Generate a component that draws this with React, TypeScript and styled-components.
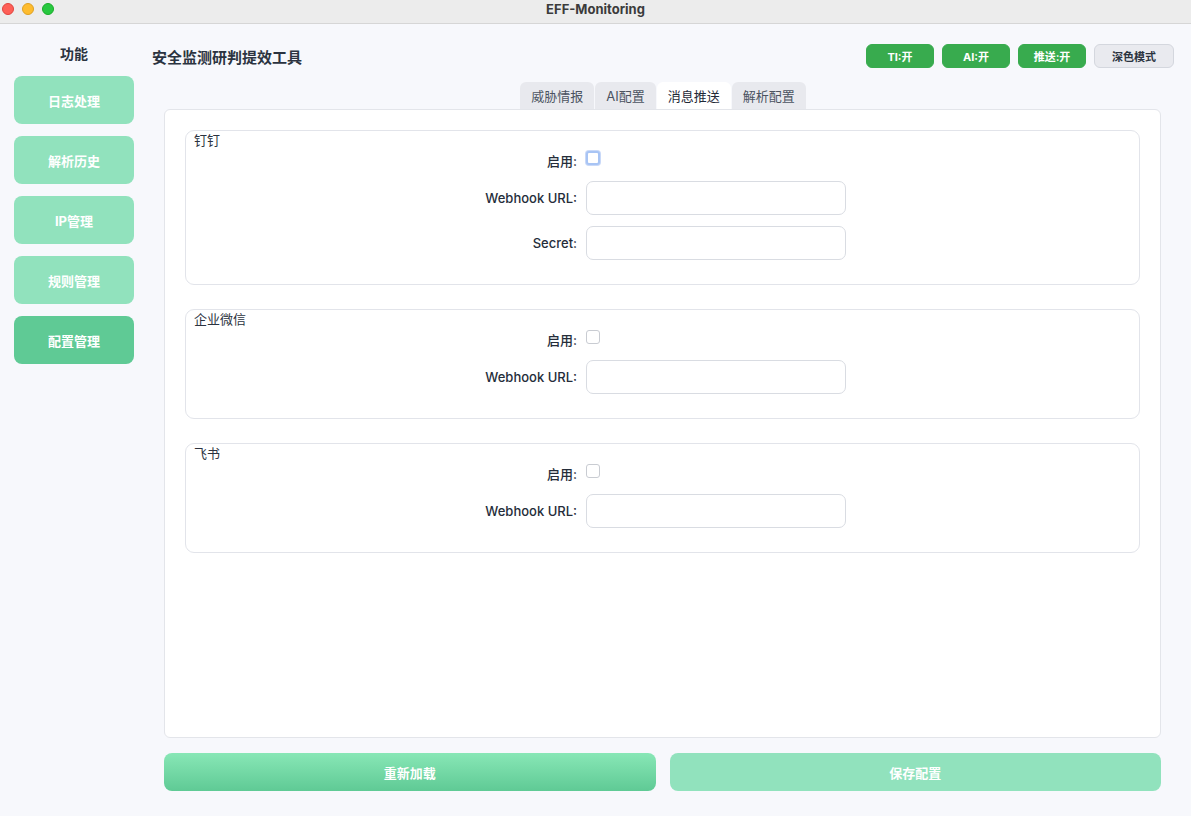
import React from "react";
import styled, { createGlobalStyle } from "styled-components";

const GlobalStyle = createGlobalStyle`
  html, body {
    margin: 0;
    padding: 0;
    background: #f7f8fc;
    font-family: "Inter", "Noto Sans CJK SC", sans-serif;
    color: #1f2937;
  }
  * { box-sizing: border-box; }
`;

const Window = styled.div`
  width: 1191px;
  height: 816px;
  display: flex;
  flex-direction: column;
  background: #f7f8fc;
  overflow: hidden;
`;

const TitleBar = styled.div`
  height: 24px;
  flex: none;
  display: flex;
  align-items: center;
  padding-bottom: 5px;
  position: relative;
  background: #ececec;
  border-bottom: 1px solid #d6d6d6;
`;

const Lights = styled.div`
  display: flex;
  gap: 8px;
  padding-left: 2px;
`;

const Light = styled.span<{ color: string; edge: string }>`
  width: 12px;
  height: 12px;
  border-radius: 50%;
  background: ${({ color }) => color};
  border: 0.5px solid ${({ edge }) => edge};
`;

const WindowTitle = styled.div`
  position: absolute;
  left: 0;
  right: 0;
  top: 1px;
  text-align: center;
  font-size: 13px;
  font-weight: 700;
  color: #3b3b3b;
  pointer-events: none;
`;

const Body = styled.div`
  flex: 1;
  display: flex;
  min-height: 0;
`;

const Sidebar = styled.div`
  width: 152px;
  flex: none;
  padding: 20px 18px 0 14px;
  display: flex;
  flex-direction: column;
  gap: 12px;
`;

const SideTitle = styled.div`
  text-align: center;
  font-size: 14px;
  font-weight: 700;
  color: #2b3340;
  height: 20px;
  line-height: 20px;
`;

const NavButton = styled.div<{ active?: boolean }>`
  height: 48px;
  border-radius: 8px;
  background: ${({ active }) => (active ? "#5fca95" : "#91e2bd")};
  color: #ffffff;
  font-size: 13px;
  font-weight: 700;
  display: flex;
  align-items: center;
  justify-content: center;
`;

const Main = styled.div`
  flex: 1;
  display: flex;
  flex-direction: column;
  padding: 20px 17px 25px 0;
  min-width: 0;
`;

const Header = styled.div`
  display: flex;
  align-items: center;
  justify-content: space-between;
  height: 24px;
`;

const PageTitle = styled.div`
  font-size: 15px;
  font-weight: 700;
  color: #2b3340;
`;

const Toggles = styled.div`
  display: flex;
  gap: 8px;
`;

const Pill = styled.div<{ variant?: "green" | "gray" }>`
  height: 24px;
  width: ${({ variant }) => (variant === "gray" ? "80px" : "68px")};
  border-radius: 6px;
  font-size: 11px;
  font-weight: 700;
  display: flex;
  align-items: center;
  justify-content: center;
  background: ${({ variant }) => (variant === "gray" ? "#e9eaef" : "#38ab4e")};
  color: ${({ variant }) => (variant === "gray" ? "#2b3340" : "#ffffff")};
  border: 1px solid ${({ variant }) => (variant === "gray" ? "#d4d7de" : "#38ab4e")};
`;

const Content = styled.div`
  flex: 1;
  display: flex;
  flex-direction: column;
  padding: 14px 13px 0 12px;
  min-height: 0;
`;

const TabBar = styled.div`
  display: flex;
  justify-content: center;
  gap: 1px;
  height: 27px;
  margin-left: 1px;
`;

const Tab = styled.div<{ active?: boolean }>`
  padding: 0 11px;
  height: 27px;
  display: flex;
  align-items: center;
  font-size: 13px;
  border-radius: 6px 6px 0 0;
  background: ${({ active }) => (active ? "#ffffff" : "#e8e9ee")};
  color: ${({ active }) => (active ? "#1f2937" : "#4b5361")};
`;

const Panel = styled.div`
  flex: 1;
  background: #ffffff;
  border: 1px solid #e3e5ea;
  border-radius: 6px;
  padding: 20px 20px 0 20px;
  display: flex;
  flex-direction: column;
  gap: 24px;
`;

const Group = styled.div<{ h: number }>`
  height: ${({ h }) => h}px;
  border: 1px solid #e2e4ea;
  border-radius: 9px;
  padding: 0 8px 0 8px;
`;

const GroupTitle = styled.div`
  font-size: 13px;
  line-height: 18px;
  color: #2b3340;
`;

const Form = styled.div`
  display: grid;
  grid-template-columns: 120px 260px;
  column-gap: 9px;
  row-gap: 11px;
  justify-content: center;
  align-items: center;
  margin-left: -22px;
  padding-top: 2px;
`;

const Label = styled.div`
  text-align: right;
  font-size: 13px;
  font-weight: 500;
  color: #252d3a;
`;

const Check = styled.div<{ focused?: boolean }>`
  width: 14px;
  height: 14px;
  border-radius: 3px;
  background: #fff;
  border: ${({ focused }) => (focused ? "2px solid #a8c4f4" : "1px solid #c9ccd2")};
  box-shadow: ${({ focused }) => (focused ? "0 0 0 1px #c9d9f8" : "none")};
`;

const CheckRow = styled.div`
  height: 14px;
  margin-bottom: 5px;
  display: flex;
  align-items: center;
`;

const Input = styled.div`
  height: 34px;
  border: 1px solid #d9dce2;
  border-radius: 7px;
  background: #fff;
`;

const Actions = styled.div`
  display: flex;
  gap: 14px;
  margin-top: 15px;
  padding-right: 13px;
  padding-left: 12px;
`;

const ActionButton = styled.div<{ gradient?: boolean }>`
  flex: 1;
  height: 38px;
  border-radius: 8px;
  display: flex;
  align-items: center;
  justify-content: center;
  color: #fff;
  font-size: 13px;
  font-weight: 700;
  background: ${({ gradient }) =>
    gradient ? "linear-gradient(180deg, #88e7b6 0%, #5fca95 100%)" : "#91e2bd"};
`;

const navItems = ["日志处理", "解析历史", "IP管理", "规则管理", "配置管理"];
const tabs = ["威胁情报", "AI配置", "消息推送", "解析配置"];

type Field = { label: string; kind: "check" | "input"; focused?: boolean };

const groups: { title: string; h: number; fields: Field[] }[] = [
  {
    title: "钉钉",
    h: 155,
    fields: [
      { label: "启用:", kind: "check", focused: true },
      { label: "Webhook URL:", kind: "input" },
      { label: "Secret:", kind: "input" },
    ],
  },
  {
    title: "企业微信",
    h: 110,
    fields: [
      { label: "启用:", kind: "check" },
      { label: "Webhook URL:", kind: "input" },
    ],
  },
  {
    title: "飞书",
    h: 110,
    fields: [
      { label: "启用:", kind: "check" },
      { label: "Webhook URL:", kind: "input" },
    ],
  },
];

export default function App() {
  return (
    <Window>
      <GlobalStyle />
      <TitleBar>
        <Lights>
          <Light color="#fe5f57" edge="#e0443e" />
          <Light color="#febc2e" edge="#dea123" />
          <Light color="#28c840" edge="#1aab29" />
        </Lights>
        <WindowTitle>EFF-Monitoring</WindowTitle>
      </TitleBar>
      <Body>
        <Sidebar>
          <SideTitle>功能</SideTitle>
          {navItems.map((n) => (
            <NavButton key={n} active={n === "配置管理"}>
              {n}
            </NavButton>
          ))}
        </Sidebar>
        <Main>
          <Header>
            <PageTitle>安全监测研判提效工具</PageTitle>
            <Toggles>
              <Pill>TI:开</Pill>
              <Pill>AI:开</Pill>
              <Pill>推送:开</Pill>
              <Pill variant="gray">深色模式</Pill>
            </Toggles>
          </Header>
          <Content>
            <TabBar>
              {tabs.map((t) => (
                <Tab key={t} active={t === "消息推送"}>
                  {t}
                </Tab>
              ))}
            </TabBar>
            <Panel>
              {groups.map((g) => (
                <Group key={g.title} h={g.h}>
                  <GroupTitle>{g.title}</GroupTitle>
                  <Form>
                    {g.fields.map((f, i) => (
                      <React.Fragment key={i}>
                        <Label>{f.label}</Label>
                        {f.kind === "check" ? (
                          <CheckRow>
                            <Check focused={f.focused} />
                          </CheckRow>
                        ) : (
                          <Input />
                        )}
                      </React.Fragment>
                    ))}
                  </Form>
                </Group>
              ))}
            </Panel>
          </Content>
          <Actions>
            <ActionButton gradient>重新加载</ActionButton>
            <ActionButton>保存配置</ActionButton>
          </Actions>
        </Main>
      </Body>
    </Window>
  );
}
